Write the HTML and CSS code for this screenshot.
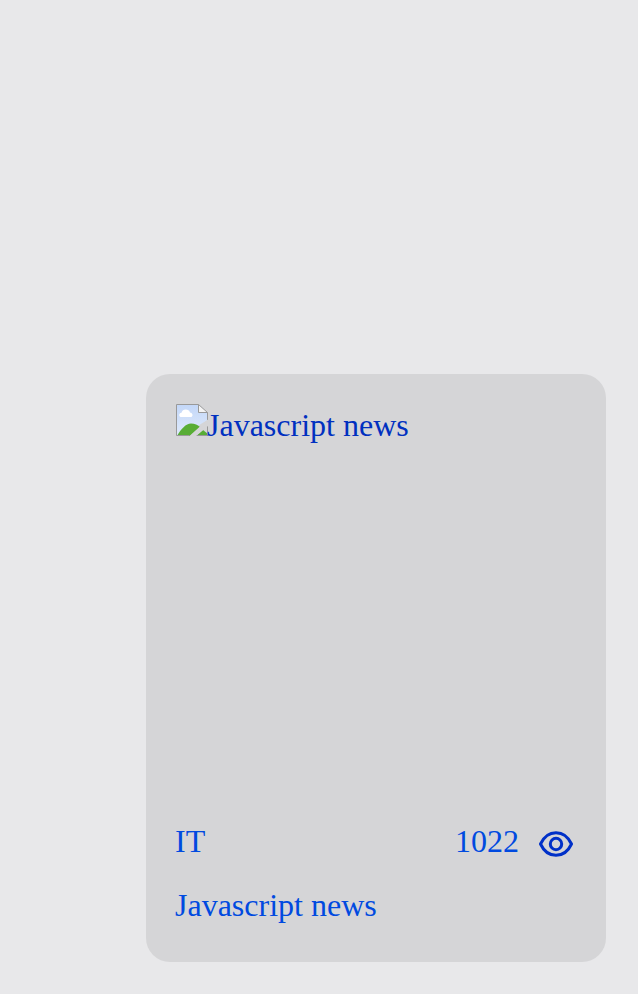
FILE: index.html
```html
<!DOCTYPE html>
<html lang="en">
<head>
<meta charset="utf-8">
<title>News</title>
<link rel="stylesheet" href="styles.css">
</head>
<body>
<article class="card">
  <div class="cover">
    <svg class="cover-icon" viewBox="0 0 32 32" aria-hidden="true">
      <defs>
        <linearGradient id="sky" x1="0" y1="0" x2="0" y2="1">
          <stop offset="0" stop-color="#c3d7f8"/>
          <stop offset="1" stop-color="#dfeafb"/>
        </linearGradient>
      </defs>
      <path d="M.5.5H22.5L31.5 9V16L24 20.500L13.500 31.500H.5Z" fill="url(#sky)"/>
      <path d="M4.500 13a2.200 2.200 0 0 1 1-4.200a4.500 4.500 0 0 1 8.500-.3a2.500 2.500 0 0 1 1.500 4.500Z" fill="#fff"/>
      <path d="M1 32C5 25 10 19.500 15 19.500c4 0 6.500 1.500 9 3.500L14 32ZM20 32L27 26L32 30V32Z" fill="#58ad35"/>
      <path d="M22.500.5V8.500H31.500Z" fill="#f4f4f4"/>
      <path d="M13.500 31.500H.5V.5H22.500L31.500 8.500V16M22.500.5V8.500H31.500M31.500 22V31.500H20.500" fill="none" stroke="#999"/>
      <path d="M13.500 32L24 22.500L32 15.500V22L20 32Z" fill="#d5d5d7"/>
    </svg><span class="cover-text">Javascript news</span>
  </div>
  <div class="meta">
    <span>IT</span>
    <span class="views">1022
      <svg class="eye" viewBox="0 0 34 26" fill="none" stroke="#0030c8" stroke-width="3" aria-hidden="true">
        <path d="M1.500 13C5 5.500 10 1.700 17 1.700S29 5.500 32.500 13C29 20.500 24 24.300 17 24.300S5 20.500 1.500 13Z" stroke-linejoin="round"/>
        <circle cx="17" cy="13" r="5.700"/>
      </svg>
    </span>
  </div>
  <div class="title">Javascript news</div>
</article>
</body>
</html>
```
FILE: styles.css
```css
body {
  margin: 0;
  background: #e8e8ea;
  font: 32px/36px "Liberation Serif", serif;
  color: #004ae0;
}

.card {
  box-sizing: border-box;
  width: 460px;
  height: 588px;
  margin: 374px 0 0 146px;
  padding: 30px 30px 0;
  border-radius: 24px;
  background: #d5d5d7;
}

.cover {
  display: flex;
  height: 400px;
  color: #0030c0;
}

.cover-icon {
  flex: none;
  width: 32px;
  height: 32px;
}

.cover-text {
  margin: 3px 0 0 -1px;
}

.meta {
  display: flex;
  justify-content: space-between;
  margin-top: 19px;
  padding-right: 3px;
}

.meta span:first-child,
.title {
  margin-left: -1px;
}

.views {
  display: flex;
  align-items: center;
  gap: 20px;
}

.eye {
  width: 34px;
  height: 26px;
  margin-top: 6px;
}

.title {
  margin-top: 28px;
}
```
